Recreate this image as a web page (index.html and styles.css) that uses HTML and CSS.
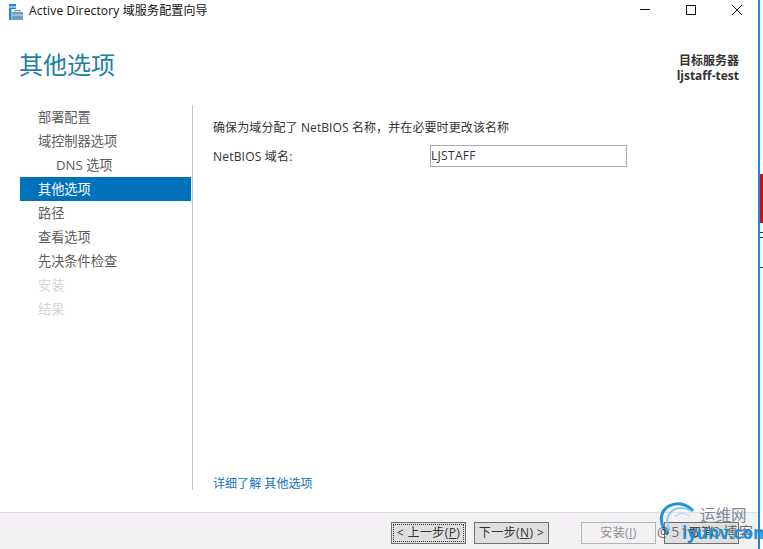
FILE: index.html
```html
<!DOCTYPE html>
<html lang="zh">
<head>
<meta charset="utf-8">
<title>Active Directory 域服务配置向导</title>
<link rel="stylesheet" href="styles.css">
</head>
<body>
<div class="screen">
  <div class="window">
    <div class="titlebar">
      <svg class="appicon" width="16" height="16" viewBox="0 0 16 16">
        <rect x="0" y="0" width="7" height="2.5" fill="#1e88e0"/>
        <rect x="0" y="3.5" width="7" height="1.5" fill="#1e88e0"/>
        <rect x="0" y="5" width="2.5" height="11" fill="#1e88e0"/>
        <rect x="3" y="8" width="11" height="8" fill="#6f9dbd"/>
        <rect x="3" y="10.5" width="11" height="1" fill="#d5e3ec"/>
        <path d="M6 8V6.5H11V8" fill="none" stroke="#6f8ca3" stroke-width="1"/>
      </svg>
      <span class="titletext">Active Directory 域服务配置向导</span>
      <div class="winbtns">
        <svg width="12" height="12" viewBox="0 0 12 12"><path d="M1 5.5H11" stroke="#111" fill="none"/></svg>
        <svg width="12" height="12" viewBox="0 0 12 12"><rect x="1.5" y="1.5" width="9" height="9" stroke="#111" fill="none"/></svg>
        <svg width="12" height="12" viewBox="0 0 12 12"><path d="M1 1L11 11M11 1L1 11" stroke="#111" fill="none"/></svg>
      </div>
    </div>
    <div class="header">
      <h1 class="heading">其他选项</h1>
      <div class="target"><div>目标服务器</div><div>ljstaff-test</div></div>
    </div>
    <div class="main">
      <ul class="nav">
        <li class="nav-item">部署配置</li>
        <li class="nav-item">域控制器选项</li>
        <li class="nav-item sub">DNS 选项</li>
        <li class="nav-item active">其他选项</li>
        <li class="nav-item">路径</li>
        <li class="nav-item">查看选项</li>
        <li class="nav-item">先决条件检查</li>
        <li class="nav-item off">安装</li>
        <li class="nav-item off">结果</li>
      </ul>
      <div class="content">
        <p class="intro">确保为域分配了 NetBIOS 名称，并在必要时更改该名称</p>
        <div class="field">
          <label class="field-label">NetBIOS 域名:</label>
          <div class="input">LJSTAFF</div>
        </div>
        <a class="more">详细了解 其他选项</a>
      </div>
    </div>
    <div class="footer">
      <button class="btn focus">&lt; 上一步(<u>P</u>)</button>
      <button class="btn">下一步(<u>N</u>) &gt;</button>
      <button class="btn disabled gap">安装(<u>I</u>)</button>
      <button class="btn">取消</button>
    </div>
  </div>
  <div class="edge">
    <div class="edge-red"></div>
    <div class="edge-mark m1"></div>
    <div class="edge-mark m2"></div>
    <div class="edge-mark m3"></div>
  </div>
  <div class="watermark">
    <svg class="wm-logo" width="44" height="42" viewBox="0 0 44 42">
      <path d="M37 12C30 4 20 3 13 7C4 12 2 24 12 35" fill="none" stroke="#1f93d6" stroke-width="3"/>
      <path d="M35 12C29 8 21 8 16 12C10 17 10 25 14 31" fill="none" stroke="#8ccbec" stroke-width="2"/>
      <path d="M33 17C28 13 22 14 19 18" fill="none" stroke="#b9dff3" stroke-width="1.5"/>
    </svg>
    <span class="wm-cn">运维网</span>
    <span class="wm-blog">@51CTO博客</span>
    <span class="wm-url">iyunv.com</span>
  </div>
</div>
</body>
</html>
```
FILE: styles.css
```css
* { box-sizing: border-box; }
html, body { margin: 0; padding: 0; background: #fff; }
body { font-family: "Open Sans", "Noto Sans CJK SC", sans-serif; font-size: 12px; color: #444; overflow: hidden; }
.screen { position: relative; display: flex; width: 763px; height: 549px; overflow: hidden; }
.window { width: 760px; height: 549px; display: flex; flex-direction: column; border-right: 2px solid #2a82c9; background: #fff; flex: none; }
.titlebar { height: 22px; flex: none; display: flex; align-items: center; padding-left: 9px; }
.appicon { margin-right: 4px; flex: none; margin-top: 1px; }
.titletext { font-size: 12px; color: #111; white-space: nowrap; margin-top: -3px; letter-spacing: .15px; }
.winbtns { margin-left: auto; display: flex; gap: 34px; margin-right: 15px; margin-top: -2px; }
.winbtns svg { display: block; }
.header { height: 83px; flex: none; display: flex; justify-content: space-between; padding: 27px 19px 0 19px; }
.heading { margin: 0; font-size: 24px; font-weight: 400; color: #1a7fa8; line-height: 32px; }
.target { font-size: 12px; font-weight: 700; color: #333; text-align: right; line-height: 15px; padding-top: 4px; }
.main { flex: 1; display: flex; min-height: 0; }
.nav { list-style: none; margin: 0 0 22px 20px; padding: 0; width: 173px; border-right: 1px solid #c8c8c8; flex: none; }
.nav-item { height: 24px; line-height: 24px; padding-left: 18px; width: 171px; font-size: 13.2px; color: #5c5c5c; white-space: nowrap; }
.sub { padding-left: 36px; }
.active { background: #0072bc; color: #fff; }
.off { color: #d6d6d6; }
.content { flex: 1; display: flex; flex-direction: column; padding: 14px 0 0 20px; margin-bottom: 20px; }
.intro { margin: 0; font-size: 12px; line-height: 17px; color: #333; white-space: nowrap; letter-spacing: .1px; }
.field { display: flex; align-items: center; margin-top: 9px; }
.field-label { width: 217px; flex: none; color: #333; letter-spacing: .2px; }
.input { width: 197px; height: 22px; border: 1px solid #aaa; line-height: 20px; padding-left: 0; color: #333; font-size: 12px; letter-spacing: .3px; }
.more { margin-top: auto; color: #0d74bd; font-size: 12px; line-height: 17px; letter-spacing: .05px; }
.footer { height: 37px; flex: none; display: flex; align-items: flex-start; padding: 9px 0 0 391px; gap: 8px; background: #f4f1f5; border-top: 1px solid #e1dde2; }
.btn { width: 75px; height: 22px; margin: 0; padding: 0; border: 1px solid #707070; background: #dfdfdf; font: inherit; font-size: 12px; line-height: 18px; color: #333; letter-spacing: .4px; }
.focus { outline: 1px dotted #333; outline-offset: -3px; }
.disabled { background: #f4f1f5; border-color: #b5b5b5; color: #8f8f8f; }
.gap { margin-left: 24px; }
.edge { flex: 1; position: relative; }
.edge-red { position: absolute; left: 0; top: 174px; width: 3px; height: 49px; background: #d50b12; }
.edge-mark { position: absolute; left: 0; width: 3px; height: 1px; background: #333; }
.m1 { top: 232px; }
.m2 { top: 237px; }
.m3 { top: 267px; }
.watermark { position: absolute; left: 0; top: 0; width: 763px; height: 549px; pointer-events: none; }
.wm-logo { position: absolute; left: 656px; top: 499px; }
.wm-cn { position: absolute; left: 700px; top: 505px; font-size: 15.5px; line-height: 20px; color: #7b8a96; }
.wm-blog { position: absolute; left: 657px; top: 522px; font-size: 14px; line-height: 20px; color: #444; letter-spacing: 1.7px; opacity: .75; white-space: nowrap; }
.wm-url { position: absolute; left: 682px; top: 522px; font-size: 17px; font-weight: 700; line-height: 22px; color: #1f8fd6; white-space: nowrap; }
```
